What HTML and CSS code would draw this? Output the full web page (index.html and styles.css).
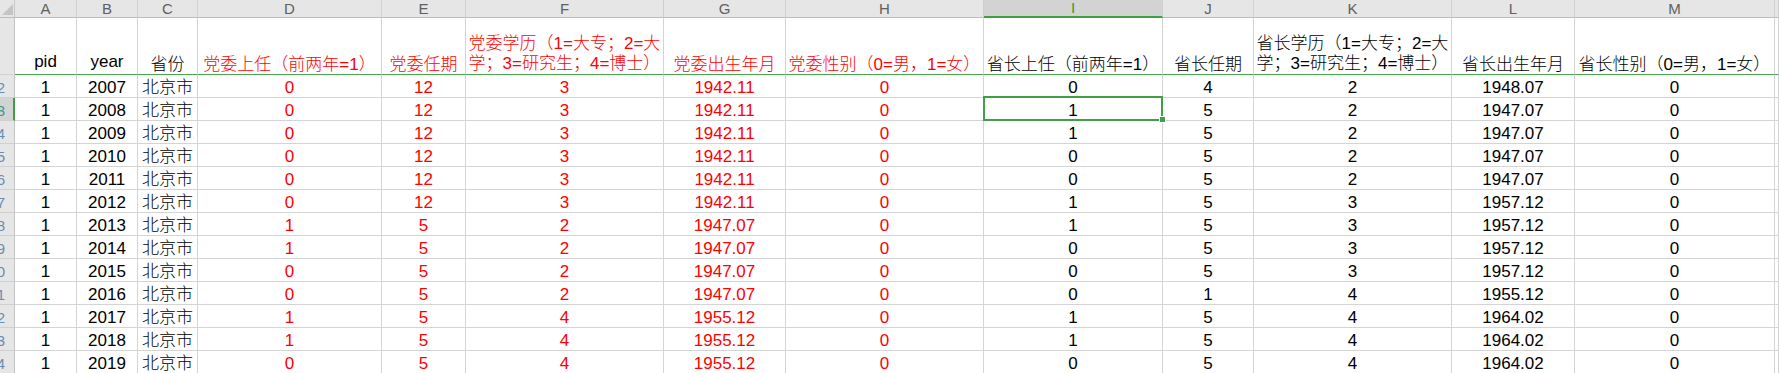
FILE: index.html
```html
<!DOCTYPE html>
<html lang="zh">
<head>
<meta charset="utf-8">
<title>Sheet</title>
<link rel="stylesheet" href="styles.css">
</head>
<body>
<div class="sheet">
  <div class="row colhead">
    <div class="corner"><svg width="14" height="17" viewBox="0 0 14 17"><polygon points="13,4 13,15 2,15" fill="#c4c4c4"/></svg></div>
    <div class="ch">A</div><div class="ch">B</div><div class="ch">C</div><div class="ch">D</div><div class="ch">E</div><div class="ch">F</div><div class="ch">G</div><div class="ch">H</div><div class="ch on">I</div><div class="ch">J</div><div class="ch">K</div><div class="ch">L</div><div class="ch">M</div><div class="ch"></div>
  </div>
  <div class="row head">
    <div class="rh"></div>
    <div class="c lat">pid</div><div class="c lat">year</div><div class="c">省份</div>
    <div class="c r">党委上任（前两年=1）</div><div class="c r">党委任期</div>
    <div class="c r wrap">党委学历（1=大专；2=大<br>学；3=研究生；4=博士）</div>
    <div class="c r">党委出生年月</div><div class="c r">党委性别（0=男，1=女）</div>
    <div class="c">省长上任（前两年=1）</div><div class="c">省长任期</div>
    <div class="c wrap">省长学历（1=大专；2=大<br>学；3=研究生；4=博士）</div>
    <div class="c">省长出生年月</div><div class="c">省长性别（0=男，1=女）</div><div class="c"></div>
  </div>
  <div class="row"><div class="rh"><span>2</span></div><div class="c">1</div><div class="c">2007</div><div class="c">北京市</div><div class="c r">0</div><div class="c r">12</div><div class="c r">3</div><div class="c r">1942.11</div><div class="c r">0</div><div class="c">0</div><div class="c">4</div><div class="c">2</div><div class="c">1948.07</div><div class="c">0</div><div class="c"></div></div>
  <div class="row"><div class="rh on"><span>3</span></div><div class="c">1</div><div class="c">2008</div><div class="c">北京市</div><div class="c r">0</div><div class="c r">12</div><div class="c r">3</div><div class="c r">1942.11</div><div class="c r">0</div><div class="c sel">1</div><div class="c">5</div><div class="c">2</div><div class="c">1947.07</div><div class="c">0</div><div class="c"></div></div>
  <div class="row"><div class="rh"><span>4</span></div><div class="c">1</div><div class="c">2009</div><div class="c">北京市</div><div class="c r">0</div><div class="c r">12</div><div class="c r">3</div><div class="c r">1942.11</div><div class="c r">0</div><div class="c">1</div><div class="c">5</div><div class="c">2</div><div class="c">1947.07</div><div class="c">0</div><div class="c"></div></div>
  <div class="row"><div class="rh"><span>5</span></div><div class="c">1</div><div class="c">2010</div><div class="c">北京市</div><div class="c r">0</div><div class="c r">12</div><div class="c r">3</div><div class="c r">1942.11</div><div class="c r">0</div><div class="c">0</div><div class="c">5</div><div class="c">2</div><div class="c">1947.07</div><div class="c">0</div><div class="c"></div></div>
  <div class="row"><div class="rh"><span>6</span></div><div class="c">1</div><div class="c">2011</div><div class="c">北京市</div><div class="c r">0</div><div class="c r">12</div><div class="c r">3</div><div class="c r">1942.11</div><div class="c r">0</div><div class="c">0</div><div class="c">5</div><div class="c">2</div><div class="c">1947.07</div><div class="c">0</div><div class="c"></div></div>
  <div class="row"><div class="rh"><span>7</span></div><div class="c">1</div><div class="c">2012</div><div class="c">北京市</div><div class="c r">0</div><div class="c r">12</div><div class="c r">3</div><div class="c r">1942.11</div><div class="c r">0</div><div class="c">1</div><div class="c">5</div><div class="c">3</div><div class="c">1957.12</div><div class="c">0</div><div class="c"></div></div>
  <div class="row"><div class="rh"><span>8</span></div><div class="c">1</div><div class="c">2013</div><div class="c">北京市</div><div class="c r">1</div><div class="c r">5</div><div class="c r">2</div><div class="c r">1947.07</div><div class="c r">0</div><div class="c">1</div><div class="c">5</div><div class="c">3</div><div class="c">1957.12</div><div class="c">0</div><div class="c"></div></div>
  <div class="row"><div class="rh"><span>9</span></div><div class="c">1</div><div class="c">2014</div><div class="c">北京市</div><div class="c r">1</div><div class="c r">5</div><div class="c r">2</div><div class="c r">1947.07</div><div class="c r">0</div><div class="c">0</div><div class="c">5</div><div class="c">3</div><div class="c">1957.12</div><div class="c">0</div><div class="c"></div></div>
  <div class="row"><div class="rh"><span>10</span></div><div class="c">1</div><div class="c">2015</div><div class="c">北京市</div><div class="c r">0</div><div class="c r">5</div><div class="c r">2</div><div class="c r">1947.07</div><div class="c r">0</div><div class="c">0</div><div class="c">5</div><div class="c">3</div><div class="c">1957.12</div><div class="c">0</div><div class="c"></div></div>
  <div class="row"><div class="rh"><span>11</span></div><div class="c">1</div><div class="c">2016</div><div class="c">北京市</div><div class="c r">0</div><div class="c r">5</div><div class="c r">2</div><div class="c r">1947.07</div><div class="c r">0</div><div class="c">0</div><div class="c">1</div><div class="c">4</div><div class="c">1955.12</div><div class="c">0</div><div class="c"></div></div>
  <div class="row"><div class="rh"><span>12</span></div><div class="c">1</div><div class="c">2017</div><div class="c">北京市</div><div class="c r">1</div><div class="c r">5</div><div class="c r">4</div><div class="c r">1955.12</div><div class="c r">0</div><div class="c">1</div><div class="c">5</div><div class="c">4</div><div class="c">1964.02</div><div class="c">0</div><div class="c"></div></div>
  <div class="row"><div class="rh"><span>13</span></div><div class="c">1</div><div class="c">2018</div><div class="c">北京市</div><div class="c r">1</div><div class="c r">5</div><div class="c r">4</div><div class="c r">1955.12</div><div class="c r">0</div><div class="c">1</div><div class="c">5</div><div class="c">4</div><div class="c">1964.02</div><div class="c">0</div><div class="c"></div></div>
  <div class="row"><div class="rh"><span>14</span></div><div class="c">1</div><div class="c">2019</div><div class="c">北京市</div><div class="c r">0</div><div class="c r">5</div><div class="c r">4</div><div class="c r">1955.12</div><div class="c r">0</div><div class="c">0</div><div class="c">5</div><div class="c">4</div><div class="c">1964.02</div><div class="c">0</div><div class="c"></div></div>
</div>
</body>
</html>
```
FILE: styles.css
```css
html, body {
  margin: 0;
  padding: 0;
  background: #ffffff;
  overflow: hidden;
}

.sheet {
  font-family: "Liberation Sans", "Noto Sans CJK SC", sans-serif;
  font-size: 17px;
  color: #000000;
  width: 1779px;
}

.row {
  display: grid;
  grid-template-columns: 15px 62px 61px 60px 184px 84px 198px 122px 198px 179px 91px 198px 123px 200px 1fr;
  height: 23px;
}

.row > div {
  box-sizing: border-box;
}

/* column letter bar */
.colhead {
  height: 18px;
}

.corner {
  background: #e6e6e6;
  border-right: 1px solid #c8c8c8;
  border-bottom: 1px solid #bcbcbc;
}

.corner svg {
  display: block;
}

.ch {
  background: #e6e6e6;
  border-right: 1px solid #d0d0d0;
  border-bottom: 1px solid #bcbcbc;
  color: #606060;
  font-size: 15px;
  line-height: 17px;
  text-align: center;
}

.ch.on {
  background: #d3d3d3;
  color: #2f9a3a;
  border-bottom: 2px solid #3ea043;
  line-height: 16px;
}

/* row number strip */
.rh {
  background: #e6e6e6;
  border-right: 1px solid #c4c4c4;
  border-bottom: 1px solid #d0d0d0;
  overflow: hidden;
  display: flex;
  justify-content: flex-end;
  align-items: flex-end;
  padding-right: 9px;
  font-size: 15px;
  line-height: 19px;
  color: #6a8cb4;
  white-space: nowrap;
}

.rh.on {
  background: #d3d3d3;
  border-right: 2px solid #3ea043;
  padding-right: 8px;
  color: #3a9a8a;
}

/* cells */
.c {
  border-right: 1px solid #d4d4d4;
  border-bottom: 1px solid #d4d4d4;
  display: flex;
  justify-content: center;
  align-items: flex-end;
  text-align: center;
  line-height: 19px;
  white-space: nowrap;
  font-weight: 300;
}

.r {
  color: #ff0000;
}

/* header row */
.head {
  height: 57px;
}

.head .c {
  border-bottom-color: #46a84a;
}

.head .lat {
  padding-bottom: 3px;
}

.head .wrap {
  line-height: 20px;
}

/* active cell */
.sel {
  position: relative;
}

.sel::before {
  content: "";
  position: absolute;
  top: -2px;
  left: -1px;
  right: -1px;
  bottom: -1px;
  border: 2px solid #3ea043;
}

.sel::after {
  content: "";
  position: absolute;
  right: -4px;
  bottom: -3px;
  width: 5px;
  height: 5px;
  background: #3ea043;
  border: 1px solid #ffffff;
}
```
